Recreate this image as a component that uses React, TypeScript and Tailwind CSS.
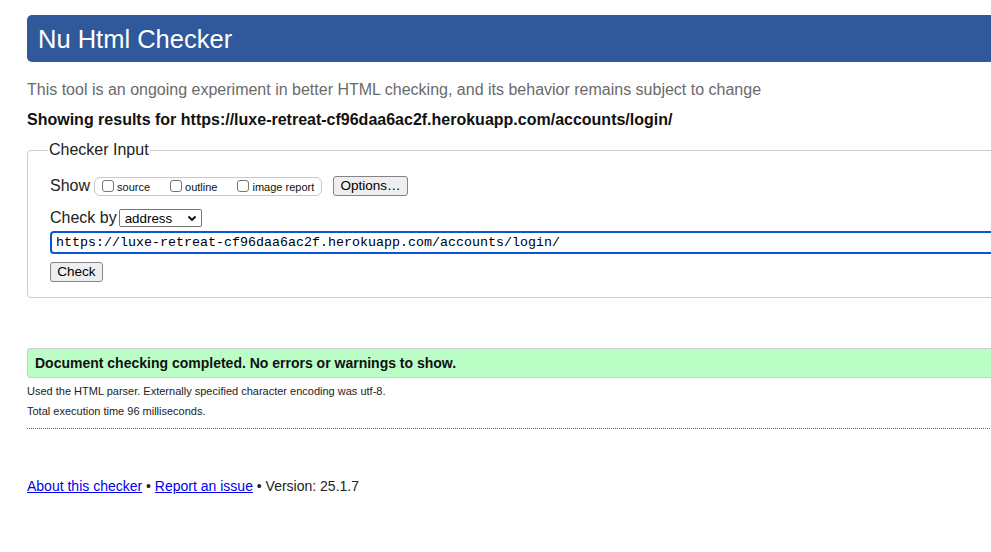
import React from "react";

function Box({ label, className = "" }: { label: string; className?: string }) {
  return (
    <span className={`flex items-center ${className}`}>
      <span className="w-[12px] h-[12px] border border-[#767676] rounded-[3px] bg-white mr-[3px] mt-[-1px]" />
      <span className="text-[11px] leading-[13px] text-[#111] mt-[3px]">{label}</span>
    </span>
  );
}

export default function App() {
  return (
    <div
      className="w-[991px] h-[552px] overflow-hidden bg-white text-black"
      style={{ fontFamily: '"Liberation Sans", Arial, Helvetica, sans-serif' }}
    >
      <div className="w-[1120px] pl-[27px]">
        <div className="mt-[15px] h-[47px] bg-[#30599b] rounded-[5px] pl-[11px] flex items-center">
          <h1 className="text-[25.5px] leading-[30px] text-white">Nu Html Checker</h1>
        </div>
        <p className="mt-[19px] text-[16px] leading-[18px] text-[#6a6a6a]">
          This tool is an ongoing experiment in better HTML checking, and its behavior remains subject to change
        </p>
        <p className="mt-[12px] text-[16px] leading-[18px] font-bold text-[#111]">
          Showing results for https://luxe-retreat-cf96daa6ac2f.herokuapp.com/accounts/login/
        </p>
        <fieldset className="mt-[12px] border border-[#cccccc] rounded-[4px] pl-[20px] pb-[15px]">
          <legend className="px-[1px] text-[16px] leading-[18px] text-[#222]">Checker Input</legend>
          <div className="pl-[2px]">
            <div className="mt-[17px] h-[20px] flex items-center">
              <span className="text-[16px] leading-[18px] text-[#222] mr-[4px]">Show</span>
              <div className="h-[19px] w-[228px] border border-[#c8c8c8] rounded-[6px] flex items-center pl-[7px]">
                <Box label="source" />
                <Box label="outline" className="ml-[20px]" />
                <Box label="image report" className="ml-[20px]" />
              </div>
              <button className="ml-[11px] h-[20px] w-[75px] border border-[#858585] rounded-[3px] bg-[#efefef] text-[13.5px] leading-[16px] text-black flex items-center justify-center">
                Options…
              </button>
            </div>
            <div className="mt-[13px] h-[18px] flex items-center">
              <span className="text-[16px] leading-[18px] text-[#222] mr-[2px]">Check by</span>
              <div className="h-[18px] w-[83px] border border-[#767676] rounded-[2px] bg-white flex items-center pl-[5px] pr-[4px] justify-between">
                <span className="text-[13.33px] leading-[15px] text-black">address</span>
                <svg width="10" height="7" viewBox="0 0 10 7">
                  <path d="M1.5 1.5 L5 5 L8.5 1.5" fill="none" stroke="#000" strokeWidth="1.8" />
                </svg>
              </div>
            </div>
            <div className="mt-[4px] h-[23px] border-2 border-[#0a55d6] rounded-[4px] flex items-center pl-[4px]">
              <span
                className="text-[13.33px] leading-[16px] text-black"
                style={{ fontFamily: '"Liberation Mono", "DejaVu Sans Mono", monospace' }}
              >
                https://luxe-retreat-cf96daa6ac2f.herokuapp.com/accounts/login/
              </span>
            </div>
            <button className="mt-[8px] h-[20px] w-[53px] border border-[#858585] rounded-[3px] bg-[#efefef] text-[13.5px] leading-[16px] text-black flex items-center justify-center">
              Check
            </button>
          </div>
        </fieldset>
        <div className="mt-[50px] h-[30px] bg-[#bbfec6] border border-[#cccccc] rounded-l-[3px] flex items-center pl-[7px]">
          <span className="text-[14px] leading-[16px] font-bold text-[#111]">
            Document checking completed. No errors or warnings to show.
          </span>
        </div>
        <p className="mt-[7px] text-[11px] leading-[13px] text-[#222]">
          Used the HTML parser. Externally specified character encoding was utf-8.
        </p>
        <p className="mt-[7px] text-[11px] leading-[13px] text-[#222]">Total execution time 96 milliseconds.</p>
        <div className="mt-[10px] border-b border-dotted border-[#666]" />
        <p className="mt-[49px] text-[14px] leading-[16px] text-[#222]">
          <a className="text-[#0000ee] underline">About this checker</a> •{" "}
          <a className="text-[#0000ee] underline">Report an issue</a> • Version: 25.1.7
        </p>
      </div>
    </div>
  );
}
